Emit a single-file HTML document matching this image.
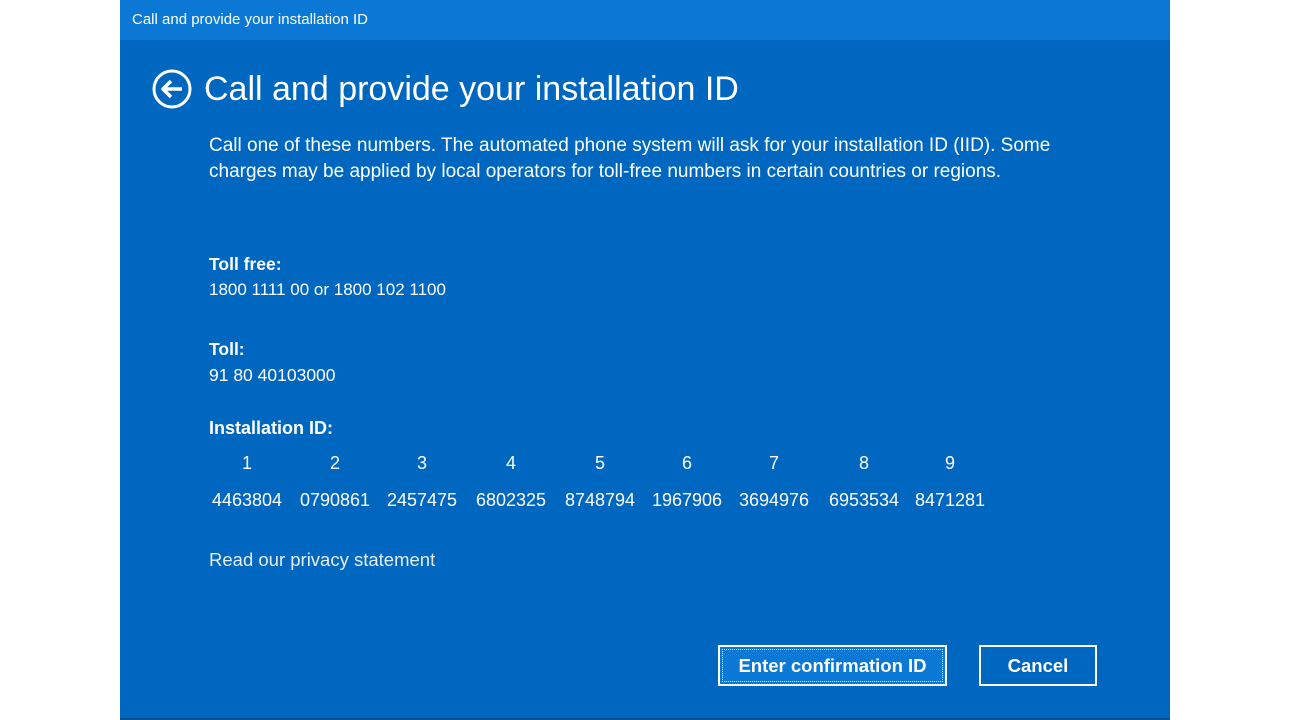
<!DOCTYPE html>
<html><head><meta charset="utf-8"><style>
body{margin:0;width:1290px;height:720px;background:#fff;position:relative;overflow:hidden;font-family:"Liberation Sans",sans-serif;color:#fff}
.win{position:absolute;left:120px;top:0;width:1050px;height:718px;background:#0067c0;border-bottom:2px solid #0a4f8f}
.tb{position:absolute;left:0;top:0;width:1050px;height:40px;background:#0a78d4}
.t{position:absolute;white-space:nowrap}
.n{position:absolute;width:80px;text-align:center;font-size:18px}
.btn{position:absolute;top:645px;height:41px;border:2px solid #fff;box-sizing:border-box;font-size:18.5px;font-weight:bold;text-align:center;line-height:38px}
</style></head><body>
<div class="win">
<div class="tb"></div>
<div class="t" style="left:12px;top:11px;font-size:15px">Call and provide your installation ID</div>
<svg style="position:absolute;left:32px;top:69px" width="40" height="40" viewBox="0 0 40 40"><circle cx="20" cy="20" r="18" fill="none" stroke="#fff" stroke-width="3"/><path d="M30 20H12M19 12l-8 8 8 8" fill="none" stroke="#fff" stroke-width="3.5" stroke-linejoin="round"/></svg>
<div class="t" style="left:84px;top:70px;font-size:34px">Call and provide your installation ID</div>
<div class="t" style="left:89px;top:133px;font-size:19px;line-height:26px">Call one of these numbers. The automated phone system will ask for your installation ID (IID). Some<br>charges may be applied by local operators for toll-free numbers in certain countries or regions.</div>
<div class="t" style="left:89px;top:254px;font-size:17.5px;font-weight:bold">Toll free:</div>
<div class="t" style="left:89px;top:280px;font-size:17px">1800 1111 00 or 1800 102 1100</div>
<div class="t" style="left:89px;top:339px;font-size:17.5px;font-weight:bold">Toll:</div>
<div class="t" style="left:89px;top:365px;font-size:17.5px">91 80 40103000</div>
<div class="t" style="left:89px;top:418px;font-size:18px;font-weight:bold">Installation ID:</div>
<div class="n" style="left:87px;top:453px">1</div><div class="n" style="left:175px;top:453px">2</div><div class="n" style="left:262px;top:453px">3</div><div class="n" style="left:351px;top:453px">4</div><div class="n" style="left:440px;top:453px">5</div><div class="n" style="left:527px;top:453px">6</div><div class="n" style="left:614px;top:453px">7</div><div class="n" style="left:704px;top:453px">8</div><div class="n" style="left:790px;top:453px">9</div>
<div class="n" style="left:87px;top:490px">4463804</div><div class="n" style="left:175px;top:490px">0790861</div><div class="n" style="left:262px;top:490px">2457475</div><div class="n" style="left:351px;top:490px">6802325</div><div class="n" style="left:440px;top:490px">8748794</div><div class="n" style="left:527px;top:490px">1967906</div><div class="n" style="left:614px;top:490px">3694976</div><div class="n" style="left:704px;top:490px">6953534</div><div class="n" style="left:790px;top:490px">8471281</div>
<div class="t" style="left:89px;top:549px;font-size:18.5px;color:#e6eef8">Read our privacy statement</div>
<div class="btn" style="left:598px;width:229px;background:#0a78d4;outline:1px dotted #fff;outline-offset:-5px">Enter confirmation ID</div>
<div class="btn" style="left:859px;width:118px">Cancel</div>
</div>
</body></html>
